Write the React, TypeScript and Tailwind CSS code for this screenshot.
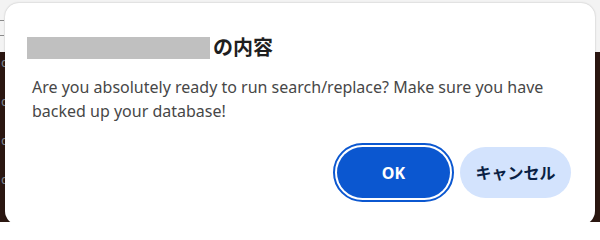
export default function App() {
  return (
    <div className="relative h-[222px] w-[600px] overflow-hidden bg-[#2b1711] font-['Noto_Sans','Noto_Sans_CJK_JP',sans-serif]">
      {/* ページ背景 */}
      <div className="flex h-[52px] flex-col gap-[14px] bg-[#f3f3f3] pt-[20px]">
        <div className="h-px w-[4px] bg-[#8a8a8a]" />
        <div className="h-px w-[4px] bg-[#8a8a8a]" />
      </div>
      <div className="flex flex-col gap-[26px] pt-[4px] pl-px text-[13px] leading-none text-[#7d8590]">
        <span>c</span>
        <span>c</span>
        <span>c</span>
        <span>c</span>
      </div>

      {/* ダイアログ */}
      <div className="absolute top-[3px] left-[5px] flex h-[222px] w-[590px] flex-col rounded-[14px] bg-white px-[27px] pt-[34px] shadow-[0_0_2px_rgba(0,0,0,0.25)]">
        <div className="flex items-center">
          <div className="-ml-[5px] h-[22px] w-[183px] bg-[#c0c0c0]" />
          <h2 className="ml-[3px] text-[20px] leading-none font-bold text-[#1f1f1f]">の内容</h2>
        </div>
        <p className="mt-[16px] text-[16px] leading-[24px] text-[#474747]">
          Are you absolutely ready to run search/replace? Make sure you have
          <br />
          backed up your database!
        </p>
        <div className="mt-[24px] -mr-[3px] flex justify-end gap-[10px]">
          <button className="h-[51px] w-[113px] rounded-full bg-[#0b57d0] text-[16px] font-bold text-white outline-2 outline-offset-2 outline-[#0b57d0]">
            OK
          </button>
          <button className="h-[51px] w-[111px] rounded-full bg-[#d3e3fd] text-[16px] font-semibold text-[#0a1f44]">
            キャンセル
          </button>
        </div>
      </div>
    </div>
  );
}
